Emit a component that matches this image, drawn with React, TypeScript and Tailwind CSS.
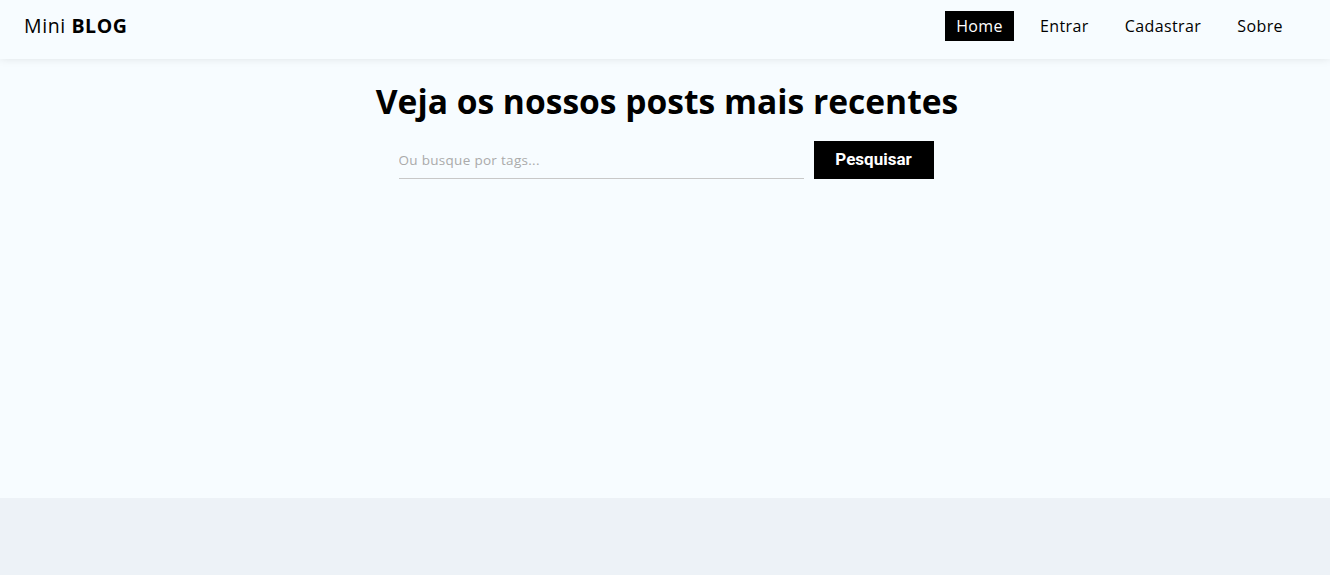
export default function App() {
  const font = { fontFamily: '"Open Sans", "Noto Sans", sans-serif' };
  return (
    <div className="min-h-[575px] bg-[#edf2f7] text-black" style={font}>
      <div className="h-[498px] bg-[#f7fcff]">
        <nav className="flex h-[59px] items-center justify-between pb-[7px] pl-6 pr-[37px] shadow-[0_-2px_10px_rgba(0,0,0,0.15)]">
          <div className="text-[19.5px] tracking-[0.6px]">
            Mini <span className="font-bold">BLOG</span>
          </div>
          <ul className="flex items-center gap-[16px] text-[16px] tracking-[0.4px]">
            <li className="bg-black px-[11px] py-[3px] text-white">Home</li>
            <li className="px-[10px] py-[3px]">Entrar</li>
            <li className="px-[10px] py-[3px]">Cadastrar</li>
            <li className="px-[10px] py-[3px]">Sobre</li>
          </ul>
        </nav>
        <main className="flex flex-col items-center">
          <h1 className="ml-[4px] mt-[20px] text-[33.6px] font-bold leading-[44px]">Veja os nossos posts mais recentes</h1>
          <form className="ml-[2px] mt-[18px] flex items-end gap-[10px]">
            <input
              placeholder="Ou busque por tags..."
              className="h-[38px] w-[405px] border-b border-[#c8c8c8] bg-transparent text-[13.5px] tracking-[0.3px] outline-none placeholder:text-[#aaa]"
            />
            <button
              type="button"
              className="h-[38px] w-[120px] bg-black text-[17px] font-bold text-white"
              style={{ fontFamily: 'Roboto, Arial, sans-serif' }}
            >
              Pesquisar
            </button>
          </form>
        </main>
      </div>
    </div>
  );
}
